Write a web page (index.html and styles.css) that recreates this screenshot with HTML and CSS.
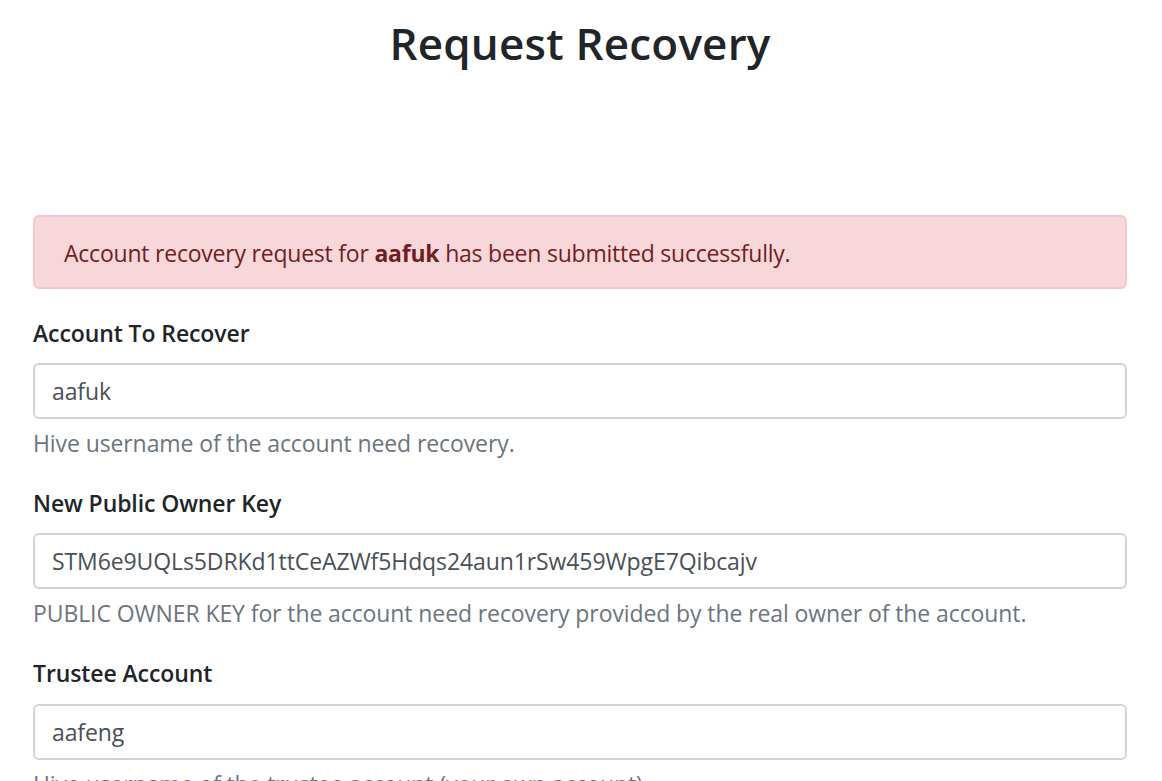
FILE: index.html
```html
<!DOCTYPE html>
<html lang="en">
<head>
<meta charset="utf-8">
<title>Request Recovery</title>
<link rel="stylesheet" href="styles.css">
</head>
<body>
<div class="container">
  <h1 class="title">Request Recovery</h1>
  <div class="alert">Account recovery request for <b>aafuk</b> has been submitted successfully.</div>
  <form class="form">
    <div class="form-group">
      <label class="label" for="acc">Account To Recover</label>
      <input class="input" id="acc" type="text" value="aafuk">
      <small class="help">Hive username of the account need recovery.</small>
    </div>
    <div class="form-group">
      <label class="label" for="key">New Public Owner Key</label>
      <input class="input" id="key" type="text" value="STM6e9UQLs5DRKd1ttCeAZWf5Hdqs24aun1rSw459WpgE7Qibcajv">
      <small class="help">PUBLIC OWNER KEY for the account need recovery provided by the real owner of the account.</small>
    </div>
    <div class="form-group">
      <label class="label" for="trustee">Trustee Account</label>
      <input class="input" id="trustee" type="text" value="aafeng">
      <small class="help">Hive username of the trustee account (your own account).</small>
    </div>
  </form>
</div>
</body>
</html>
```
FILE: styles.css
```css
* { box-sizing: border-box; }
html, body { margin: 0; padding: 0; }
body {
  font-family: "Open Sans", "Noto Sans", sans-serif;
  font-size: 23px;
  line-height: 36px;
  letter-spacing: -0.1px;
  color: #212529;
  background: #fff;
}
.container {
  padding: 0 35px 0 33px;
}
.title {
  margin: 17px 0 145px;
  font-size: 44px;
  line-height: 53px;
  font-weight: 600;
  letter-spacing: 0.2px;
  text-align: center;
}
.alert {
  margin-bottom: 26px;
  padding: 18px 29px 16px;
  background: #f8d7da;
  border: 2px solid #f5c6cb;
  border-radius: 6px;
  color: #721c24;
  letter-spacing: -0.22px;
}
.alert b { font-weight: 700; }
.form { margin: 0; }
.form-group { margin-bottom: 24px; }
.label {
  display: block;
  margin-bottom: 12px;
  font-weight: 600;
}
.form-group:last-child .label { margin-bottom: 13px; }
.input {
  display: block;
  width: 100%;
  height: 56px;
  padding: 9px 17px;
  font: inherit;
  letter-spacing: inherit;
  color: #495057;
  background: #fff;
  border: 2px solid #ced4da;
  border-radius: 6px;
}
.help {
  display: block;
  margin-top: 6px;
  font-size: 23px;
  color: #6c757d;
}
```
